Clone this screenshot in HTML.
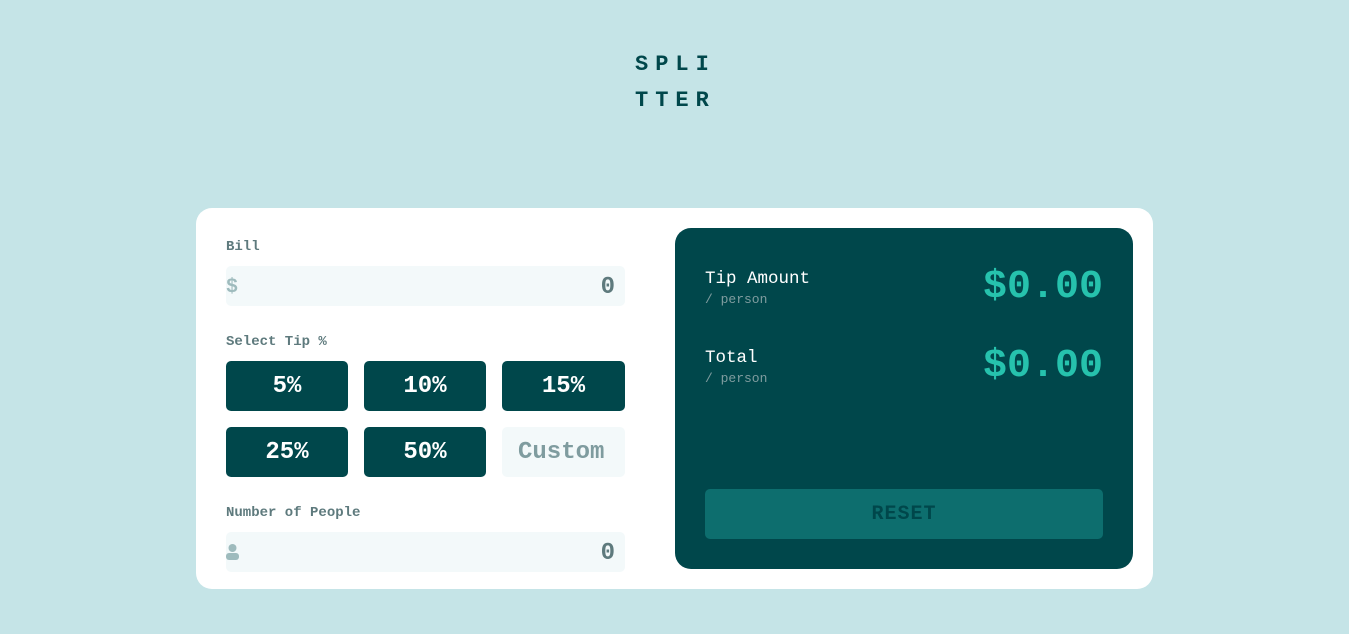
<!DOCTYPE html>
<html><head><style>
*{box-sizing:border-box;margin:0;padding:0}
body{width:1349px;height:634px;background:#c5e4e7;font-family:"Liberation Mono","DejaVu Sans Mono",monospace;font-weight:bold;position:relative;overflow:hidden}
.logo{position:absolute;left:635px;top:47px;color:#00474b;font-size:22px;line-height:36px;letter-spacing:7px}
.card{position:absolute;left:196px;top:208px;width:957px;height:381px;background:#fff;border-radius:16px}
.lbl{position:absolute;left:30px;color:#5e7a7d;font-size:14px}
.inp{position:absolute;left:30px;width:399px;height:40px;background:#f3f9fa;border-radius:5px;color:#7f9c9f;font-size:24px}
.inp .v{position:absolute;right:10px;top:8px;color:#5e7a7d}
.btn{position:absolute;width:122px;height:50px;background:#00474b;color:#fff;border-radius:5px;font-size:24px;text-align:center;line-height:52px}
.res{position:absolute;left:479px;top:20px;width:458px;height:341px;background:#00474b;border-radius:16px}
.rl{position:absolute;left:30px;color:#fff;font-size:17.5px;font-weight:normal}
.rl small{display:block;color:#7f9c9f;font-size:13px;margin-top:3px}
.amt{position:absolute;right:30px;color:#26c2ad;font-size:40px}
.reset{position:absolute;left:30px;top:261px;width:398px;height:50px;background:#0d6e6e;border-radius:5px;color:#00474b;font-size:20px;text-align:center;line-height:52px;letter-spacing:1px}
</style></head><body>
<div class="logo">SPLI<br>TTER</div>
<div class="card">
<div class="lbl" style="top:31px">Bill</div>
<div class="inp" style="top:58px"><span style="position:absolute;left:0;top:10px;font-size:20px;color:#9ebbbd">$</span><span class="v">0</span></div>
<div class="lbl" style="top:126px">Select Tip %</div>
<div class="btn" style="left:30px;top:153px">5%</div>
<div class="btn" style="left:168px;top:153px">10%</div>
<div class="btn" style="left:306px;top:153px;width:123px">15%</div>
<div class="btn" style="left:30px;top:219px">25%</div>
<div class="btn" style="left:168px;top:219px">50%</div>
<div class="btn" style="left:306px;top:219px;width:123px;background:#f3f9fa;color:#7f9c9f;text-align:left;padding-left:16px">Custom</div>
<div class="lbl" style="top:297px">Number of People</div>
<div class="inp" style="top:324px"><svg style="position:absolute;left:0;top:12px" width="13" height="16"><circle cx="6.5" cy="4" r="4" fill="#9ebbbd"/><rect x="0" y="9" width="13" height="7" rx="3" fill="#9ebbbd"/></svg><span class="v">0</span></div>
<div class="res">
<div class="rl" style="top:41px">Tip Amount<small>/ person</small></div>
<div class="amt" style="top:37px">$0.00</div>
<div class="rl" style="top:120px">Total<small>/ person</small></div>
<div class="amt" style="top:116px">$0.00</div>
<div class="reset">RESET</div>
</div>
</div>
</body></html>
